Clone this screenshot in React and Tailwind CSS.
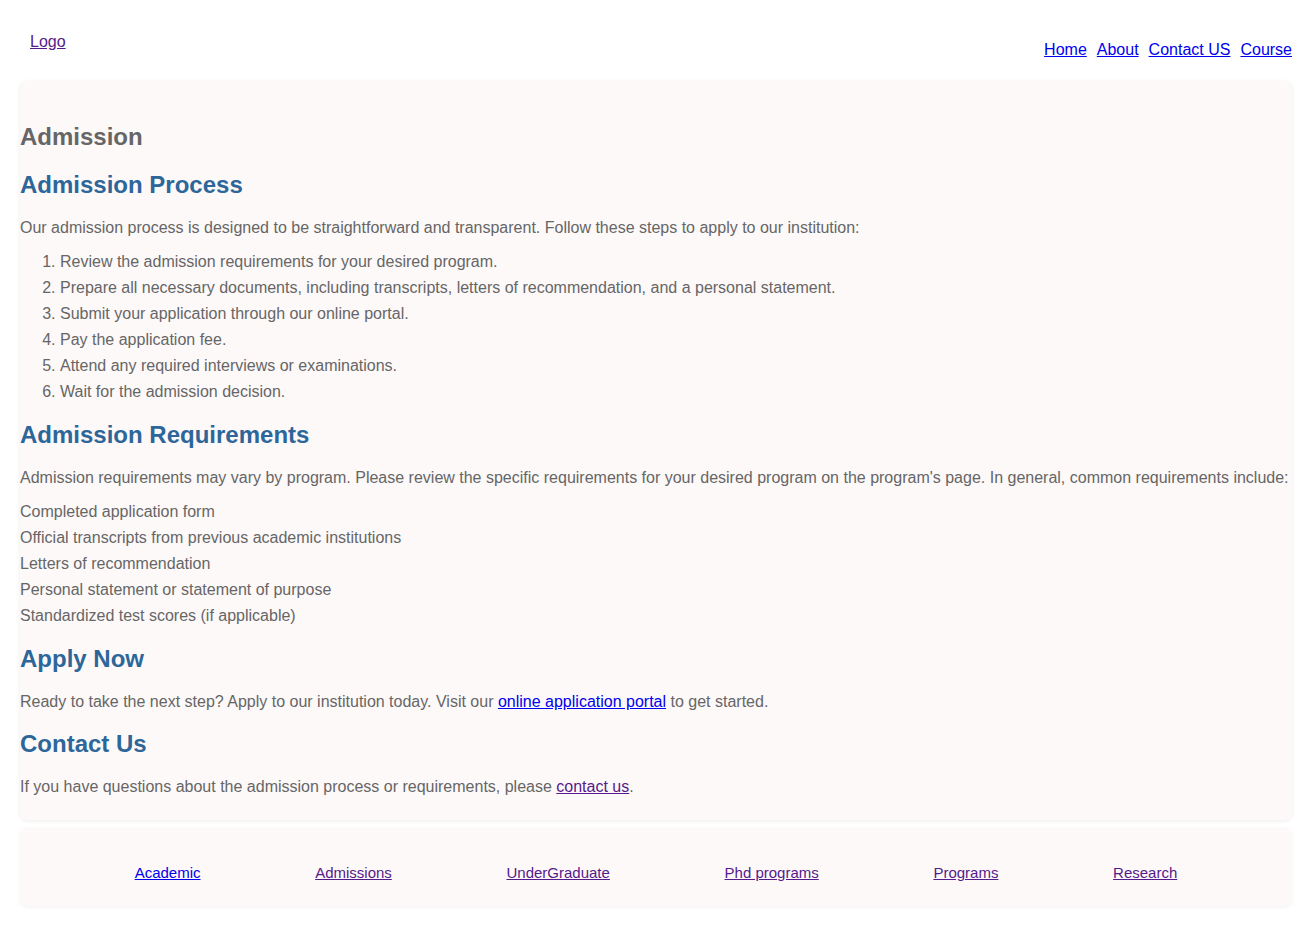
export default function App() {
  const steps = [
    "Review the admission requirements for your desired program.",
    "Prepare all necessary documents, including transcripts, letters of recommendation, and a personal statement.",
    "Submit your application through our online portal.",
    "Pay the application fee.",
    "Attend any required interviews or examinations.",
    "Wait for the admission decision.",
  ];
  const reqs = [
    "Completed application form",
    "Official transcripts from previous academic institutions",
    "Letters of recommendation",
    "Personal statement or statement of purpose",
    "Standardized test scores (if applicable)",
  ];
  const footer = [
    ["Academic", "text-[#0000ee]"],
    ["Admissions", "text-[#551a8b]"],
    ["UnderGraduate", "text-[#551a8b]"],
    ["Phd programs", "text-[#551a8b]"],
    ["Programs", "text-[#551a8b]"],
    ["Research", "text-[#551a8b]"],
  ];
  return (
    <div className="min-h-[944px] bg-white font-['Liberation_Sans',Arial,sans-serif] text-[16px]">
      <header className="flex h-[81px] items-start justify-between">
        <a href="#" className="ml-[30px] mt-[33px] leading-[18px] text-[#551a8b] underline">
          Logo
        </a>
        <nav className="mr-[5px] mt-[41px] flex gap-[10px] leading-[18px]">
          <a href="#" className="text-[#0000ee] underline">Home</a>
          <a href="#" className="text-[#0000ee] underline">About</a>
          <a href="#" className="text-[#0000ee] underline">Contact US</a>
          <a href="#" className="text-[#0000ee] underline">Course</a>
        </nav>
      </header>

      <main className="ml-[20px] mr-[5px] rounded-lg bg-[#fdf9f9] pb-[20px] pt-[42px] text-[#666666] shadow-[0_1px_4px_rgba(0,0,0,0.08)]">
        <h2 className="mb-[20px] text-[24px] font-bold leading-[28px] text-[#666666]">Admission</h2>
        <h2 className="mb-[16px] text-[24px] font-bold leading-[28px] text-[#2d6699]">Admission Process</h2>
        <p className="mb-[8px] leading-[26px]">
          Our admission process is designed to be straightforward and transparent. Follow these steps to apply to our institution:
        </p>
        <ol className="mb-[16px] list-decimal pl-[40px] leading-[26px]">
          {steps.map((s) => (
            <li key={s}>{s}</li>
          ))}
        </ol>
        <h2 className="mb-[16px] text-[24px] font-bold leading-[28px] text-[#2d6699]">Admission Requirements</h2>
        <p className="mb-[8px] leading-[26px]">
          Admission requirements may vary by program. Please review the specific requirements for your desired program on the program's page. In general, common requirements include:
        </p>
        <ul className="mb-[16px] leading-[26px]">
          {reqs.map((r) => (
            <li key={r}>{r}</li>
          ))}
        </ul>
        <h2 className="mb-[16px] text-[24px] font-bold leading-[28px] text-[#2d6699]">Apply Now</h2>
        <p className="mb-[15px] leading-[26px]">
          Ready to take the next step? Apply to our institution today. Visit our{" "}
          <a href="#" className="text-[#0000ee] underline">online application portal</a> to get started.
        </p>
        <h2 className="mb-[16px] text-[24px] font-bold leading-[28px] text-[#2d6699]">Contact Us</h2>
        <p className="leading-[26px]">
          If you have questions about the admission process or requirements, please{" "}
          <a href="#" className="text-[#551a8b] underline">contact us</a>.
        </p>
      </main>

      <footer className="ml-[20px] mr-[5px] mt-[8px] flex justify-evenly rounded-lg bg-[#fdf9f9] pb-[24px] pt-[36px] text-[15px] leading-[18px] shadow-[0_1px_4px_rgba(0,0,0,0.06)]">
        {footer.map(([t, c]) => (
          <a key={t} href="#" className={`${c} underline`}>
            {t}
          </a>
        ))}
      </footer>
    </div>
  );
}
